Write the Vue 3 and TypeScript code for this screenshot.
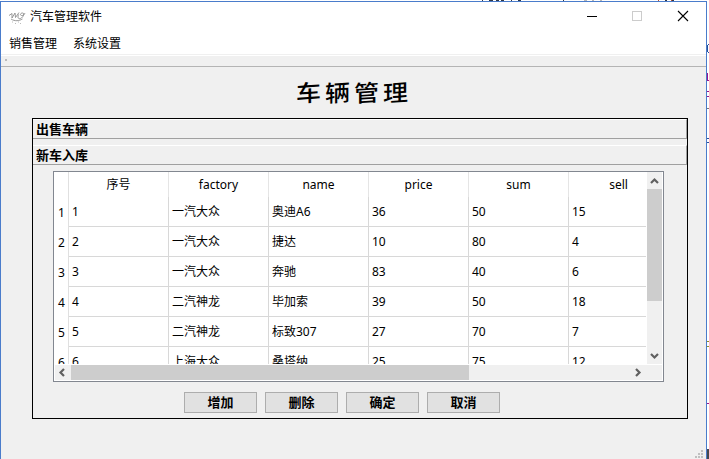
<script setup lang="ts">
interface Car {
  id: number
  factory: string
  name: string
  price: number
  sum: number
  sell: number
}

const menus: string[] = ['销售管理', '系统设置']
const heading: string[] = ['车', '辆', '管', '理']
const columns: string[] = ['序号', 'factory', 'name', 'price', 'sum', 'sell']
const cars: Car[] = [
  { id: 1, factory: '一汽大众', name: '奥迪A6', price: 36, sum: 50, sell: 15 },
  { id: 2, factory: '一汽大众', name: '捷达', price: 10, sum: 80, sell: 4 },
  { id: 3, factory: '一汽大众', name: '奔驰', price: 83, sum: 40, sell: 6 },
  { id: 4, factory: '二汽神龙', name: '毕加索', price: 39, sum: 50, sell: 18 },
  { id: 5, factory: '二汽神龙', name: '标致307', price: 27, sum: 70, sell: 7 },
  { id: 6, factory: '上海大众', name: '桑塔纳', price: 25, sum: 75, sell: 12 },
]
const actions: string[] = ['增加', '删除', '确定', '取消']
</script>

<template>
  <div class="desktop">
    <svg class="behind" width="709" height="459" shape-rendering="crispEdges">
      <path d="M482 .5h1M489 .5h4M496 .5h3M501 .5h3M511 .5h1M518 .5h3M563 .5h1M665 .5h2M672 .5h2" stroke="#303848" />
      <path d="M584 .5h3M592 .5h2M600 .5h2" stroke="#b8b8b8" />
      <path d="M658 .5h1M671 .5h1" stroke="#c05030" />
      <path d="M708 44.5h1M708 52.5h1M707.5 45v7M707 138.5h2M707 142.5h2" stroke="#28519a" />
      <path d="M707.5 73v8M707 80.5h2M707 91.5h2M707 96.5h2M707 403.5h2" stroke="#9a148e" />
      <path d="M707 108.5h2" stroke="#777" />
      <path d="M707 341.500h2M707 346.500h2" stroke="#92912c" />
      <path d="M707 449h2v10h-2z" fill="#454950" />
    </svg>
    <main class="window">
      <header class="titlebar">
        <svg class="logo" width="18" height="16" viewBox="0 0 18 16" fill="none" stroke="#808080" stroke-width=".8">
          <path d="M0 6.500l3-2M3 4.500v4.500l3-5 .5 4.500 3.500-5" />
          <path d="M9.500 5.500c-1.500 4 .5 5 3 3.500 2.500-2 3-5 1-5s-3 2-1 2.500 3-1.500 3.500-2.500" />
          <path d="M2 10c4 2.500 8 2 11.500 0" />
          <path d="M3 13h1M6 14.500h1M9 13h1M11 14.500h1" stroke="#aaa" />
        </svg>
        <span class="caption">汽车管理软件</span>
        <svg class="controls" width="104" height="12" viewBox="0 0 104 12" fill="none">
          <path d="M1 6.500h10" stroke="#000" />
          <rect x="46.500" y="1.500" width="9" height="9" stroke="#ccc" />
          <path d="M92 1l10 10M102 1L92 11" stroke="#000" stroke-width="1.100" />
        </svg>
      </header>
      <nav class="menubar">
        <span v-for="menu in menus" :key="menu">{{ menu }}</span>
      </nav>
      <div class="toolbar"><i></i></div>
      <h1><span v-for="letter in heading" :key="letter">{{ letter }}</span></h1>
      <section class="toolbox">
        <div class="tab">出售车辆</div>
        <div class="tab second">新车入库</div>
        <div class="table">
          <div class="view">
            <div class="row head">
              <div class="num"></div>
              <div v-for="column in columns" :key="column" class="cell">{{ column }}</div>
            </div>
            <div v-for="car in cars" :key="car.id" class="row">
              <div class="num">{{ car.id }}</div>
              <div class="cell">{{ car.id }}</div>
              <div class="cell">{{ car.factory }}</div>
              <div class="cell">{{ car.name }}</div>
              <div class="cell">{{ car.price }}</div>
              <div class="cell">{{ car.sum }}</div>
              <div class="cell">{{ car.sell }}</div>
            </div>
          </div>
          <div class="vbar">
            <svg width="15" height="17" viewBox="0 0 15 17"><path d="M4 11l3.500-3.500L11 11" /></svg>
            <div class="vthumb"></div>
            <svg width="15" height="17" viewBox="0 0 15 17"><path d="M4 7l3.500 3.500L11 7" /></svg>
          </div>
          <div class="hbar">
            <svg width="16" height="15" viewBox="0 0 16 15"><path d="M9 4L5.500 7.500 9 11" /></svg>
            <div class="hthumb"></div>
            <svg width="16" height="15" viewBox="0 0 16 15"><path d="M7 4l3.500 3.500L7 11" /></svg>
          </div>
          <div class="corner"></div>
        </div>
        <div class="actions">
          <button v-for="action in actions" :key="action" type="button">{{ action }}</button>
        </div>
      </section>
      <svg class="grip" width="9" height="9" viewBox="0 0 9 9" fill="#bfbfbf" shape-rendering="crispEdges">
        <path d="M6 0h2v2H6zM3 3h2v2H3zM6 3h2v2H6zM0 6h2v2H0zM3 6h2v2H3zM6 6h2v2H6z" />
      </svg>
    </main>
  </div>
</template>

<style>
body {
  overflow: hidden;
  background: #fff;
}
</style>

<style scoped>
.desktop {
  position: relative;
  box-sizing: border-box;
  width: 709px;
  height: 459px;
  padding-top: 1px;
  overflow: hidden;
  font: 12px/16px 'Noto Sans', 'Noto Sans CJK SC', sans-serif;
  color: #000;
}
.behind {
  position: absolute;
  left: 0;
  top: 0;
}
.window {
  position: relative;
  box-sizing: border-box;
  width: 707px;
  height: 458px;
  border: 1px solid #4a7ccb;
  border-bottom: 0;
  background: #f0f0f0;
}
.titlebar {
  display: flex;
  align-items: center;
  height: 29px;
  padding: 0 16px 0 8px;
  background: #fff;
}
.caption {
  margin-left: 3px;
  flex: 1;
}
.controls {
  margin-top: -1px;
}
.menubar {
  display: flex;
  gap: 16px;
  box-sizing: border-box;
  height: 25px;
  padding: 5px 8px 0;
  background: #fff;
  border-bottom: 1px solid #fff;
  box-shadow: inset 0 -1px #f0f0f0;
}
.toolbar {
  height: 10px;
  border-bottom: 1px solid #b4b4b4;
}
.toolbar i {
  display: block;
  width: 2px;
  height: 2px;
  margin-left: 4px;
  transform: translateY(3px);
  background: #bbb;
}
h1 {
  display: flex;
  justify-content: center;
  gap: 3px;
  height: 51px;
  margin: 0;
  padding-right: 3px;
  font: 500 25px/49px 'KaiTi', 'STKaiti', 'Noto Sans CJK SC', serif;
}
h1 span {
  width: 26px;
  transform: skewY(-4deg) scaleY(0.92);
}
.toolbox {
  box-sizing: border-box;
  width: 656px;
  height: 301px;
  margin-left: 31px;
  border: 1px solid #000;
}
.tab {
  box-sizing: border-box;
  height: 20px;
  padding-left: 3px;
  border: solid #a0a0a0;
  border-width: 1px 1px 1px 0;
  border-top-color: #fff;
  font: bold 13px/19px 'Liberation Sans', 'Noto Sans CJK SC', sans-serif;
}
.second {
  margin-top: 6px;
}
.table {
  display: grid;
  grid-template: 193px 16px / 593px 16px;
  width: 609px;
  margin: 6px 0 0 20px;
  border: 1px solid #828790;
  background: #fff;
}
.view {
  height: 192px;
  width: 592px;
  overflow: hidden;
}
.row {
  display: flex;
  width: 615px;
  height: 30px;
}
.num {
  box-sizing: border-box;
  width: 15px;
  height: 100%;
  flex: none;
  border-right: 1px solid #e0e0e0;
  padding-left: 4px;
  line-height: 31px;
}
.cell {
  box-sizing: border-box;
  width: 100px;
  flex: none;
  padding-left: 3px;
  border: solid #d8d8d8;
  border-width: 0 1px 1px 0;
  line-height: 29px;
}
.head {
  height: 25px;
}
.head .cell {
  padding: 0;
  border-color: #e5e5e5;
  border-bottom: 0;
  text-align: center;
  line-height: 25px;
}
.vbar {
  display: flex;
  flex-direction: column;
  justify-content: space-between;
  width: 15px;
  height: 192px;
  background: #f0f0f0;
}
.vthumb {
  height: 112px;
  margin-bottom: 46px;
  background: #cdcdcd;
}
.hbar {
  display: flex;
  width: 591px;
  height: 15px;
  margin-left: 1px;
  background: #f0f0f0;
}
.hthumb {
  width: 398px;
  margin-right: 160px;
  background: #cdcdcd;
}
.vbar svg,
.hbar svg {
  flex: none;
  fill: none;
  stroke: #606060;
  stroke-width: 2.2;
}
.corner {
  width: 16px;
  height: 15px;
  margin-left: -1px;
  background: #f0f0f0;
}
.actions {
  display: flex;
  gap: 8px;
  padding: 10px 0 0 151px;
}
button {
  box-sizing: border-box;
  width: 73px;
  height: 21px;
  padding: 0;
  border: 1px solid #adadad;
  background: #e1e1e1;
  color: #000;
  font: bold 13px/20px 'Liberation Sans', 'Noto Sans CJK SC', sans-serif;
}
.grip {
  position: absolute;
  right: 2px;
  bottom: 0;
}
</style>
